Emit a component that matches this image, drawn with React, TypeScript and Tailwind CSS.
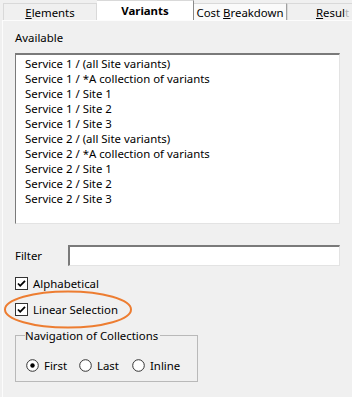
import React from "react";

const items = [
  "Service 1 / (all Site variants)",
  "Service 1 / *A collection of variants",
  "Service 1 / Site 1",
  "Service 1 / Site 2",
  "Service 1 / Site 3",
  "Service 2 / (all Site variants)",
  "Service 2 / *A collection of variants",
  "Service 2 / Site 1",
  "Service 2 / Site 2",
  "Service 2 / Site 3",
];

const CheckBox = () => (
  <svg width="13" height="13" viewBox="0 0 13 13" className="shrink-0">
    <rect x="0.5" y="0.5" width="12" height="12" fill="#fff" stroke="#333" />
    <path d="M3 6.5 L5.2 8.8 L10 3.8" fill="none" stroke="#000" strokeWidth="1.8" />
  </svg>
);

const Radio = ({ on }: { on?: boolean }) => (
  <svg width="13" height="13" viewBox="0 0 13 13" className="shrink-0">
    <circle cx="6.5" cy="6.5" r="5.8" fill="#fff" stroke="#333" />
    {on && <circle cx="6.5" cy="6.5" r="2.2" fill="#000" />}
  </svg>
);

export default function App() {
  return (
    <div
      className="relative w-[352px] h-[397px] overflow-hidden bg-[#f0f0f0] text-[11.4px] leading-[15px] text-black"
      style={{ fontFamily: '"Noto Sans", "Open Sans", sans-serif' }}
    >
      {/* tabs */}
      <div className="flex items-end h-[20px]">
        <div className="ml-[3px] w-[94px] h-[17px] border border-b-0 border-[#d9d9d9] bg-[#f0f0f0] flex items-center justify-center">
          <span><u>E</u>lements</span>
        </div>
        <div className="w-[97px] h-[20px] bg-white border-t border-[#d9d9d9] border-r border-r-[#8a8a8a] flex items-center justify-center font-bold">
          Variants
        </div>
        <div className="w-[93px] h-[17px] border-t border-r border-[#d9d9d9] border-r-[#a0a0a0] bg-[#fafafa] flex items-center justify-center">
          <span>Cost <u>B</u>reakdown</span>
        </div>
        <div className="flex-1 h-[17px] border-t border-l border-[#d9d9d9] bg-[#f0f0f0] flex items-center pl-[28px] overflow-hidden whitespace-nowrap">
          <span><u>R</u>esul<span className="text-[#b0b0b0]">t</span></span>
        </div>
      </div>

      {/* panel */}
      <div className="ml-[2px] h-[377px] border-l border-t border-[#fcfcfc] pl-[12px] pt-[9px]">
        <div>Available</div>
        <div className="mt-[8px] w-[325px] h-[171px] bg-white border-t-2 border-l border-t-[#7a7a7a] border-l-[#7a7a7a] border-r border-b border-r-[#e3e3e3] border-b-[#e3e3e3] pt-[1px] pl-[9px]">
          {items.map((t) => (
            <div key={t} className="h-[15px] whitespace-nowrap">{t}</div>
          ))}
        </div>

        <div className="mt-[21px] flex items-center">
          <span className="w-[53px]">Filter</span>
          <div className="w-[272px] h-[21px] bg-white border-t-2 border-l-2 border-t-[#7a7a7a] border-l-[#7a7a7a] border-r border-b border-r-[#e3e3e3] border-b-[#e3e3e3]" />
        </div>

        <div className="mt-[10px] flex items-center gap-[5px] h-[15px]">
          <CheckBox />
          <span>Alphabetical</span>
        </div>
        <div className="mt-[11px] flex items-center gap-[5px] h-[15px]">
          <CheckBox />
          <span>Linear Selection</span>
        </div>

        <fieldset className="mt-[11px] w-[183px] border border-[#b9b9b9] pl-[10px] pb-[8px]">
          <legend className="px-0 pr-[2px] -ml-[1px]">Navigation of Collections</legend>
          <div className="mt-[15px] flex items-center h-[15px]">
            <Radio on />
            <span className="ml-[5px] w-[35px]">First</span>
            <Radio />
            <span className="ml-[5px] w-[35px]">Last</span>
            <Radio />
            <span className="ml-[5px]">Inline</span>
          </div>
        </fieldset>
      </div>

      {/* highlight ellipse */}
      <svg className="absolute left-[3px] top-[290px]" width="130" height="39" viewBox="0 0 130 39">
        <ellipse cx="65" cy="19.5" rx="63" ry="18" fill="none" stroke="#ed7d31" strokeWidth="2" />
      </svg>
    </div>
  );
}
